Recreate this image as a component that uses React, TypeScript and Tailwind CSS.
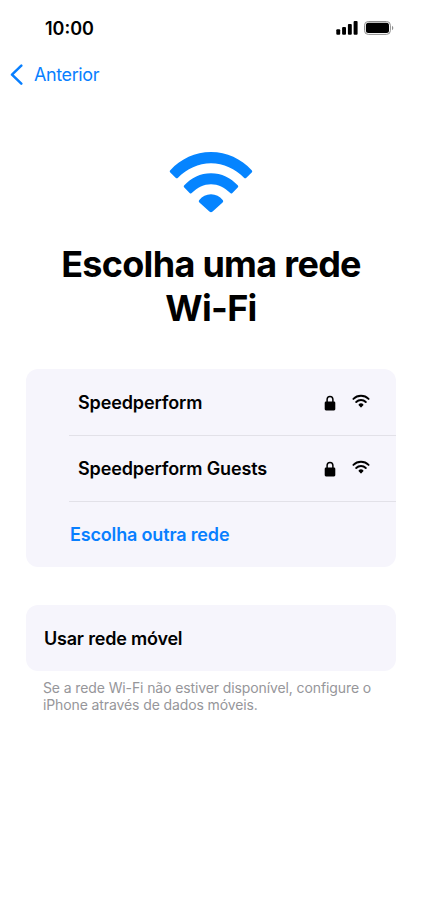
import React from 'react';

interface IconProps {
  className?: string;
}

function WifiIcon({ className }: IconProps) {
  return (
    <svg className={className} viewBox="0 0 84 62" fill="currentColor">
      <path d="M1.300 19.200C12 7.700 26 1 42 1s30 6.700 40.700 18.200c.7.700.7 1.500 0 2.200l-5.300 5.300c-.9.900-1.600.8-2.400 0C66.300 17.800 54.500 12.200 42 12.200S17.700 17.800 9 26.700c-.8.800-1.500.9-2.400 0l-5.300-5.300c-.7-.7-.7-1.500 0-2.200z" />
      <path d="M15.300 34.300C22.200 26.700 31.500 22.200 42 22.200s19.800 4.500 26.700 12.100c.7.800.7 1.500 0 2.200l-5.300 5.400c-.9.900-1.600.8-2.400-.1C55.700 36.300 49 33.200 42 33.200s-13.700 3.100-19 8.600c-.8.900-1.500 1-2.400.1l-5.300-5.400c-.7-.7-.7-1.400 0-2.200z" />
      <path d="M30.300 49C33.300 45.400 37.200 43.300 42 43.300S50.700 45.400 53.700 49c.7.900.7 1.600-.1 2.400l-10 9c-1.200 1-2 1-3.200 0l-10-9c-.8-.8-.8-1.500-.1-2.400z" />
    </svg>
  );
}

// Thinner strokes than the large icon
function SmallWifiIcon({ className }: IconProps) {
  return (
    <svg className={className} viewBox="0 0 18 14" fill="none">
      <path d="M1.400 4.900C3.400 2.900 6.100 1.800 9 1.800s5.600 1.100 7.600 3.100" stroke="currentColor" strokeWidth="1.900" strokeLinecap="round" />
      <path d="M4.200 8C5.500 6.700 7.200 6 9 6s3.500.7 4.800 2" stroke="currentColor" strokeWidth="1.900" strokeLinecap="round" />
      <path d="M6.600 10.500c.6-.8 1.500-1.200 2.400-1.200s1.800.4 2.400 1.200c.2.300.1.500-.1.700l-1.900 2c-.3.300-.5.300-.8 0l-1.900-2c-.2-.2-.3-.4-.1-.7z" fill="currentColor" />
    </svg>
  );
}

function LockIcon({ className }: IconProps) {
  return (
    <svg className={className} viewBox="0 0 12 16" fill="none">
      <rect x=".7" y="6.600" width="10.600" height="8.800" rx="1.300" fill="currentColor" />
      <path d="M3.100 7.200V4.600a2.900 3.100 0 0 1 5.800 0v2.600" stroke="currentColor" strokeWidth="1.500" />
    </svg>
  );
}

const networks = ['Speedperform', 'Speedperform Guests'];

function App() {
  return (
    <div className="min-h-[913px] bg-white font-['Inter',sans-serif] text-black">
      {/* Status bar */}
      <header className="flex h-14 items-center justify-between pl-[45px] pr-[28px]">
        <span className="pt-px text-lg font-semibold">10:00</span>
        <div className="flex items-center gap-1.5">
          <svg className="h-[14px] w-[22px]" viewBox="0 0 22 14" fill="currentColor">
            <rect x=".3" y="8.300" width="3.900" height="5.400" rx="1" />
            <rect x="6.100" y="6" width="3.900" height="7.700" rx="1" />
            <rect x="11.900" y="3" width="3.900" height="10.700" rx="1" />
            <rect x="17.600" y="0" width="4" height="13.700" rx="1" />
          </svg>
          <svg className="h-[14px] w-[30px]" viewBox="0 0 30 14" fill="none">
            <rect x=".5" y=".5" width="25.900" height="12.900" rx="3.800" stroke="#8f8f8f" />
            <rect x="1.900" y="1.800" width="23.100" height="10.300" rx="2.500" fill="black" />
            <path d="M28 4.800v4.400c1.800-.7 1.800-3.700 0-4.400z" fill="#8f8f8f" />
          </svg>
        </div>
      </header>

      <button className="flex h-[38px] items-center gap-2.5 pl-2.5 text-lg tracking-[-0.4px] text-[#087fff]">
        <svg className="h-[22px] w-[14px]" viewBox="0 0 14 22" fill="none">
          <path d="M11.300 1.700 2 10.700l9.300 8.900" stroke="currentColor" strokeWidth="2.500" strokeLinecap="round" strokeLinejoin="round" />
        </svg>
        Anterior
      </button>

      <div className="flex flex-col items-center pt-[57px]">
        <WifiIcon className="h-[62px] w-[84px] text-[#0584ff]" />
        <h1 className="mt-[29px] text-center text-4xl leading-[44px] font-bold tracking-[-0.7px]">
          Escolha uma rede
          <br />
          Wi-Fi
        </h1>
      </div>

      {/* Networks */}
      <section className="mx-[26px] mt-[39px] rounded-xl bg-[#f6f5fc] text-lg font-semibold tracking-[-0.13px]">
        {networks.map((name) => (
          <div
            key={name}
            className="ml-[43px] flex h-[66px] items-center border-b border-[#e2e1e8] pl-[9px] pr-[26px] first:h-[67px] first:pt-px"
          >
            <span className="flex-1">{name}</span>
            <LockIcon className="mr-4 h-4 w-3" />
            <SmallWifiIcon className="mb-[3px] h-[14px] w-[18px]" />
          </div>
        ))}
        <div className="flex h-[65px] items-center pl-[44px] tracking-[-0.16px] text-[#087fff]">Escolha outra rede</div>
      </section>

      <section className="mx-[26px] mt-[38px] flex h-[66px] items-center rounded-xl bg-[#f6f5fc] pl-[18px] pt-px text-lg font-semibold tracking-[-0.2px]">
        Usar rede móvel
      </section>
      <p className="mt-2 pl-[43px] text-sm leading-[17px] tracking-[-0.11px] text-[#96969a]">
        Se a rede Wi-Fi não estiver disponível, configure o
        <br />
        iPhone através de dados móveis.
      </p>
    </div>
  );
}

export default App;
